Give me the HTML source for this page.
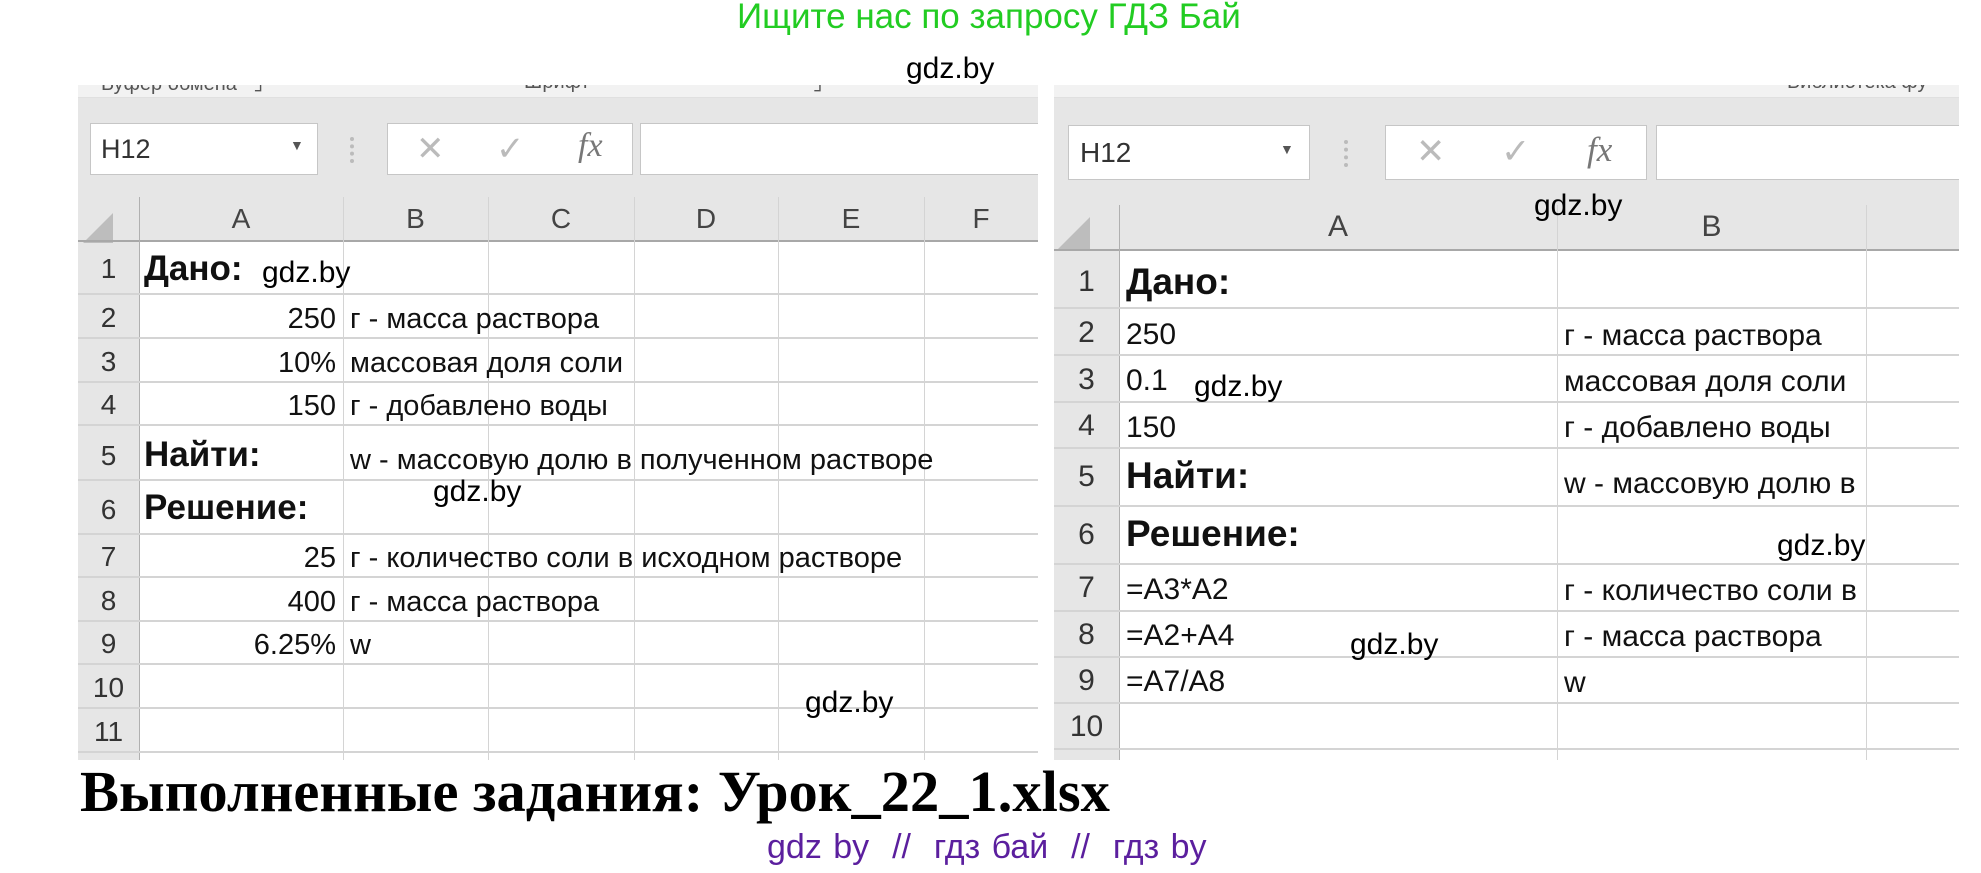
<!DOCTYPE html>
<html><head><meta charset="utf-8"><style>
*{margin:0;padding:0;box-sizing:border-box}
body{width:1981px;height:873px;background:#fff;position:relative;overflow:hidden;font-family:"Liberation Sans",sans-serif}
.a{position:absolute;white-space:nowrap}
.panel{position:absolute;background:#e6e6e6;overflow:hidden}
.rib{position:absolute;left:0;right:0;top:0;height:13px;background:#f2f2f2;overflow:hidden;border-bottom:1px solid #e0e0e0}
.rib span{position:absolute;top:-14px;font-size:20px;color:#555}
.box{position:absolute;background:#fff;border:1px solid #c6c6c6}
.cells{position:absolute;background:#fff}
.hl{position:absolute;height:2px;background:#d4d4d4}
.vl{position:absolute;width:1px;background:#d4d4d4}
.ch{position:absolute;font-size:28px;color:#444;text-align:center}
.rn{position:absolute;font-size:28px;color:#333;text-align:center}
.t{position:absolute;font-size:29px;color:#111;white-space:nowrap}
.r{font-size:30px}
.b{position:absolute;font-size:35px;font-weight:bold;color:#111;white-space:nowrap}
.w{position:absolute;font-size:30px;color:#000;white-space:nowrap}
.g{color:#bbb}
</style></head><body>

<div class="a" style="left:737px;top:-3px;font-size:35px;color:#22cc22">Ищите нас по запросу ГДЗ Бай</div>

<!-- LEFT PANEL -->
<div class="panel" style="left:78px;top:85px;width:960px;height:675px">
 <div class="rib"><span style="left:23px">Буфер обмена &nbsp; ⌟</span><span style="left:446px">Шрифт</span><span style="left:735px">⌟</span></div>
 <div class="box" style="left:12px;top:38px;width:228px;height:52px"></div>
 <div class="a" style="left:23px;top:49px;font-size:27px;color:#333">H12</div>
 <div class="a" style="left:212px;top:52px;font-size:14px;color:#555">▼</div>
 <div class="a" style="left:272px;top:52px;width:4px;height:26px;border-left:4px dotted #bbb"></div>
 <div class="box" style="left:309px;top:38px;width:246px;height:52px"></div>
 <div class="a g" style="left:338px;top:44px;font-size:34px">✕</div>
 <div class="a g" style="left:418px;top:44px;font-size:34px">✓</div>
 <div class="a" style="left:500px;top:42px;font-size:34px;font-style:italic;font-family:'Liberation Serif',serif;color:#777">fx</div>
 <div class="box" style="left:562px;top:38px;width:420px;height:52px"></div>
 <div class="a" style="left:5px;top:128px;width:0;height:0;border-left:30px solid transparent;border-bottom:30px solid #bdbdbd"></div>
 <div class="cells" style="left:61px;top:155px;width:899px;height:520px"></div>
 <div class="a" style="left:0;top:155px;width:960px;height:2px;background:#a8a8a8"></div>
 <div class="vl" style="left:61px;top:112px;height:563px;background:#b0b0b0"></div>
 <div class="vl" style="left:265px;top:112px;height:563px"></div>
 <div class="vl" style="left:410px;top:112px;height:563px"></div>
 <div class="vl" style="left:556px;top:112px;height:563px"></div>
 <div class="vl" style="left:700px;top:112px;height:563px"></div>
 <div class="vl" style="left:846px;top:112px;height:563px"></div>
 <div class="ch" style="left:61px;width:204px;top:118px">A</div>
 <div class="ch" style="left:265px;width:145px;top:118px">B</div>
 <div class="ch" style="left:410px;width:146px;top:118px">C</div>
 <div class="ch" style="left:556px;width:144px;top:118px">D</div>
 <div class="ch" style="left:700px;width:146px;top:118px">E</div>
 <div class="ch" style="left:846px;width:114px;top:118px">F</div>
 <div class="hl" style="left:0;width:960px;top:208px"></div>
 <div class="hl" style="left:0;width:960px;top:252px"></div>
 <div class="hl" style="left:0;width:960px;top:296px"></div>
 <div class="hl" style="left:0;width:960px;top:339px"></div>
 <div class="hl" style="left:0;width:960px;top:394px"></div>
 <div class="hl" style="left:0;width:960px;top:448px"></div>
 <div class="hl" style="left:0;width:960px;top:491px"></div>
 <div class="hl" style="left:0;width:960px;top:535px"></div>
 <div class="hl" style="left:0;width:960px;top:578px"></div>
 <div class="hl" style="left:0;width:960px;top:622px"></div>
 <div class="hl" style="left:0;width:960px;top:666px"></div>
 <div class="rn" style="left:0;width:61px;top:168px">1</div>
 <div class="rn" style="left:0;width:61px;top:217px">2</div>
 <div class="rn" style="left:0;width:61px;top:261px">3</div>
 <div class="rn" style="left:0;width:61px;top:304px">4</div>
 <div class="rn" style="left:0;width:61px;top:355px">5</div>
 <div class="rn" style="left:0;width:61px;top:409px">6</div>
 <div class="rn" style="left:0;width:61px;top:456px">7</div>
 <div class="rn" style="left:0;width:61px;top:500px">8</div>
 <div class="rn" style="left:0;width:61px;top:543px">9</div>
 <div class="rn" style="left:0;width:61px;top:587px">10</div>
 <div class="rn" style="left:0;width:61px;top:631px">11</div>
 <div class="b" style="left:66px;top:164px">Дано:</div>
 <div class="t" style="right:702px;top:218px">250</div>
 <div class="t" style="left:272px;top:218px">г - масса раствора</div>
 <div class="t" style="right:702px;top:262px">10%</div>
 <div class="t" style="left:272px;top:262px">массовая доля соли</div>
 <div class="t" style="right:702px;top:305px">150</div>
 <div class="t" style="left:272px;top:305px">г - добавлено воды</div>
 <div class="b" style="left:66px;top:350px">Найти:</div>
 <div class="t" style="left:272px;top:359px">w - массовую долю в полученном растворе</div>
 <div class="b" style="left:66px;top:403px">Решение:</div>
 <div class="t" style="right:702px;top:457px">25</div>
 <div class="t" style="left:272px;top:457px">г - количество соли в исходном растворе</div>
 <div class="t" style="right:702px;top:501px">400</div>
 <div class="t" style="left:272px;top:501px">г - масса раствора</div>
 <div class="t" style="right:702px;top:544px">6.25%</div>
 <div class="t" style="left:272px;top:544px">w</div>
</div>

<!-- RIGHT PANEL -->
<div class="panel" style="left:1054px;top:85px;width:905px;height:675px">
 <div class="rib"><span style="left:733px">Библиотека фу</span></div>
 <div class="box" style="left:14px;top:40px;width:242px;height:55px"></div>
 <div class="a" style="left:26px;top:52px;font-size:28px;color:#333">H12</div>
 <div class="a" style="left:226px;top:56px;font-size:14px;color:#555">▼</div>
 <div class="a" style="left:290px;top:55px;width:4px;height:27px;border-left:4px dotted #bbb"></div>
 <div class="box" style="left:331px;top:40px;width:262px;height:55px"></div>
 <div class="a g" style="left:362px;top:47px;font-size:35px">✕</div>
 <div class="a g" style="left:447px;top:47px;font-size:35px">✓</div>
 <div class="a" style="left:533px;top:45px;font-size:35px;font-style:italic;font-family:'Liberation Serif',serif;color:#777">fx</div>
 <div class="box" style="left:602px;top:40px;width:320px;height:55px"></div>
 <div class="a" style="left:4px;top:132px;width:0;height:0;border-left:32px solid transparent;border-bottom:32px solid #bdbdbd"></div>
 <div class="cells" style="left:65px;top:165px;width:840px;height:510px"></div>
 <div class="a" style="left:0;top:164px;width:905px;height:2px;background:#a8a8a8"></div>
 <div class="vl" style="left:65px;top:120px;height:555px;background:#b0b0b0"></div>
 <div class="vl" style="left:503px;top:120px;height:555px"></div>
 <div class="vl" style="left:812px;top:120px;height:555px"></div>
 <div class="ch" style="left:65px;width:438px;top:125px;font-size:30px">A</div>
 <div class="ch" style="left:503px;width:309px;top:125px;font-size:30px">B</div>
 <div class="hl" style="left:0;width:905px;top:222px"></div>
 <div class="hl" style="left:0;width:905px;top:269px"></div>
 <div class="hl" style="left:0;width:905px;top:316px"></div>
 <div class="hl" style="left:0;width:905px;top:362px"></div>
 <div class="hl" style="left:0;width:905px;top:420px"></div>
 <div class="hl" style="left:0;width:905px;top:478px"></div>
 <div class="hl" style="left:0;width:905px;top:525px"></div>
 <div class="hl" style="left:0;width:905px;top:571px"></div>
 <div class="hl" style="left:0;width:905px;top:617px"></div>
 <div class="hl" style="left:0;width:905px;top:663px"></div>
 <div class="rn" style="left:0;width:65px;top:180px;font-size:30px">1</div>
 <div class="rn" style="left:0;width:65px;top:231px;font-size:30px">2</div>
 <div class="rn" style="left:0;width:65px;top:278px;font-size:30px">3</div>
 <div class="rn" style="left:0;width:65px;top:324px;font-size:30px">4</div>
 <div class="rn" style="left:0;width:65px;top:375px;font-size:30px">5</div>
 <div class="rn" style="left:0;width:65px;top:433px;font-size:30px">6</div>
 <div class="rn" style="left:0;width:65px;top:486px;font-size:30px">7</div>
 <div class="rn" style="left:0;width:65px;top:533px;font-size:30px">8</div>
 <div class="rn" style="left:0;width:65px;top:579px;font-size:30px">9</div>
 <div class="rn" style="left:0;width:65px;top:625px;font-size:30px">10</div>
 <div class="b" style="left:72px;top:176px;font-size:37px">Дано:</div>
 <div class="t r" style="left:72px;top:233px">250</div>
 <div class="t r" style="left:510px;top:234px">г - масса раствора</div>
 <div class="t r" style="left:72px;top:279px">0.1</div>
 <div class="t r" style="left:510px;top:280px;width:302px;overflow:hidden">массовая доля соли</div>
 <div class="t r" style="left:72px;top:326px">150</div>
 <div class="t r" style="left:510px;top:326px">г - добавлено воды</div>
 <div class="b" style="left:72px;top:370px;font-size:37px">Найти:</div>
 <div class="t r" style="left:510px;top:382px;width:302px;overflow:hidden">w - массовую долю в</div>
 <div class="b" style="left:72px;top:428px;font-size:37px">Решение:</div>
 <div class="t r" style="left:72px;top:488px">=A3*A2</div>
 <div class="t r" style="left:510px;top:489px;width:302px;overflow:hidden">г - количество соли в</div>
 <div class="t r" style="left:72px;top:534px">=A2+A4</div>
 <div class="t r" style="left:510px;top:535px">г - масса раствора</div>
 <div class="t r" style="left:72px;top:580px">=A7/A8</div>
 <div class="t r" style="left:510px;top:581px">w</div>
</div>

<!-- watermarks -->
<div class="w" style="left:906px;top:52px">gdz.by</div>
<div class="w" style="left:262px;top:256px">gdz.by</div>
<div class="w" style="left:433px;top:475px">gdz.by</div>
<div class="w" style="left:805px;top:686px">gdz.by</div>
<div class="w" style="left:1534px;top:189px">gdz.by</div>
<div class="w" style="left:1194px;top:370px">gdz.by</div>
<div class="w" style="left:1777px;top:529px">gdz.by</div>
<div class="w" style="left:1350px;top:628px">gdz.by</div>

<div class="a" style="left:80px;top:758px;font-family:'Liberation Serif',serif;font-weight:bold;font-size:58.5px;color:#000">Выполненные задания: Урок_22_1.xlsx</div>
<div class="a" style="left:767px;top:828px;font-size:34px;color:#5b1f9e;word-spacing:2px">gdz by &nbsp;// &nbsp;гдз бай &nbsp;// &nbsp;гдз by</div>
</body></html>
